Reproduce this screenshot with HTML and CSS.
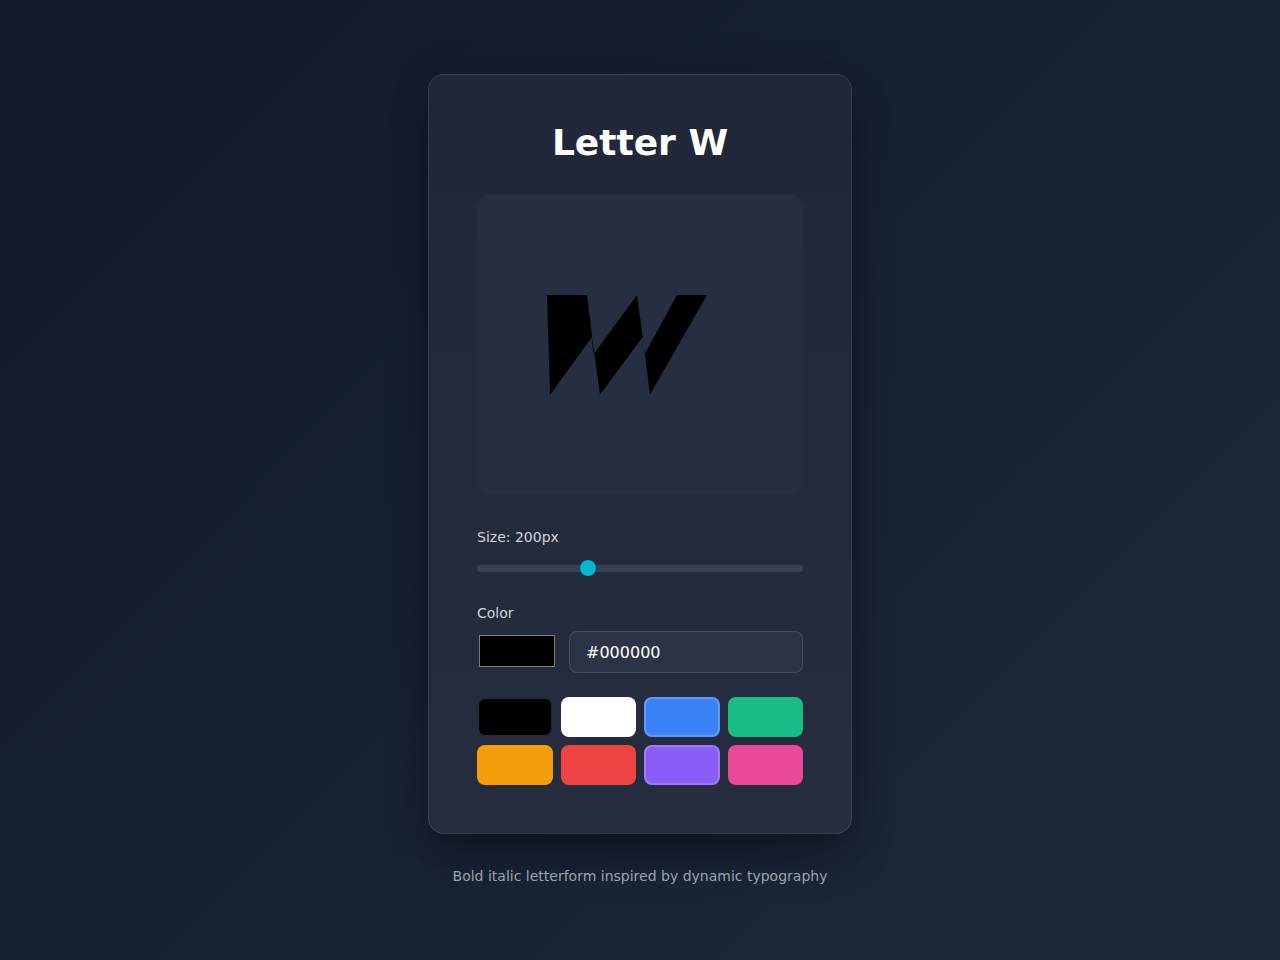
FILE: index.html
```html
<!DOCTYPE html>
<html lang="en">
<head>
<meta charset="utf-8">
<title>Letter W</title>
<link rel="stylesheet" href="styles.css">
</head>
<body>
<main class="page">
  <section class="card">
    <h1 class="title">Letter W</h1>
    <div class="preview">
      <svg class="glyph" width="326" height="300" viewBox="477 195 326 300" aria-label="W">
        <path fill="#000000" d="M547 295 L587 295 L592 337 L550 395 Z"/>
        <path fill="#000000" d="M587 295 L593.5 354.5 L637 295 L642.7 337 L600 394.5 L592 337 Z"/>
        <path fill="#000000" d="M637 295 L645 353.5 L677 295 L707 295 L650 394.5 L642.7 337 Z"/>
      </svg>
    </div>
    <div class="field">
      <label class="label" for="size">Size: 200px</label>
      <input id="size" class="slider" type="range" min="50" max="500" value="200">
    </div>
    <div class="field field-color">
      <span class="label">Color</span>
      <div class="color-row">
        <div class="picker"><span class="picker-swatch"></span></div>
        <input class="hex" type="text" value="#000000">
      </div>
    </div>
    <div class="swatches">
      <button class="swatch sw-black selected"></button>
      <button class="swatch sw-white"></button>
      <button class="swatch sw-blue ringed"></button>
      <button class="swatch sw-green"></button>
      <button class="swatch sw-amber"></button>
      <button class="swatch sw-red"></button>
      <button class="swatch sw-purple ringed"></button>
      <button class="swatch sw-pink"></button>
    </div>
  </section>
  <p class="caption">Bold italic letterform inspired by dynamic typography</p>
</main>
</body>
</html>
```
FILE: styles.css
```css
* { box-sizing: border-box; }
html, body { margin: 0; padding: 0; }
body {
  min-height: 100vh;
  background: linear-gradient(135deg, #111a2d 0%, #1e293b 100%);
  font-family: "DejaVu Sans", "Liberation Sans", sans-serif;
  color: #fff;
}
.page {
  min-height: 100vh;
  display: flex;
  flex-direction: column;
  align-items: center;
  justify-content: center;
}
.card {
  width: 424px;
  padding: 48px;
  border: 1px solid rgba(255, 255, 255, 0.1);
  border-radius: 16px;
  background: linear-gradient(180deg, #1f2738 0%, #252d3f 100%);
  box-shadow: 0 25px 50px -12px rgba(0, 0, 0, 0.45), 0 0 40px rgba(0, 0, 0, 0.14);
}
.title {
  margin: 0 0 32px;
  font-size: 36px;
  line-height: 40px;
  font-weight: 700;
  text-align: center;
  color: #ffffff;
}
.preview {
  height: 300px;
  border-radius: 12px;
  background: #262f42;
  overflow: hidden;
  display: flex;
}
.glyph { display: block; }
.field { margin-top: 32px; }
.label {
  display: block;
  font-size: 14px;
  line-height: 20px;
  color: #d1d5db;
  margin-bottom: 13px;
}
.slider {
  -webkit-appearance: none;
  appearance: none;
  display: block;
  width: 100%;
  height: 16px;
  margin: 0;
  background: transparent;
}
.slider::-webkit-slider-runnable-track {
  height: 7px;
  border-radius: 4px;
  background: #394253;
}
.slider::-webkit-slider-thumb {
  -webkit-appearance: none;
  appearance: none;
  width: 16px;
  height: 16px;
  margin-top: -4.5px;
  border: none;
  border-radius: 50%;
  background: #06b6d4;
}
.field-color { margin-top: 27px; }
.field-color .label { margin-bottom: 8px; }
.color-row {
  display: flex;
  gap: 12px;
  align-items: stretch;
}
.picker {
  width: 80px;
  height: 42px;
  padding-top: 4px;
  display: flex;
  justify-content: center;
  align-items: flex-start;
}
.picker-swatch {
  width: 76px;
  height: 32px;
  background: #000;
  border: 1px solid #777b82;
}
.hex {
  flex: 1;
  height: 42px;
  padding: 0 16px;
  border: 1px solid rgba(255, 255, 255, 0.12);
  border-radius: 8px;
  background: #2b3446;
  color: #ffffff;
  font-family: "DejaVu Sans", "Liberation Sans", sans-serif;
  font-size: 16px;
  outline: none;
}
.swatches {
  margin-top: 24px;
  display: grid;
  grid-template-columns: repeat(4, 1fr);
  gap: 8px;
}
.swatch {
  height: 40px;
  padding: 0;
  border: 2px solid transparent;
  border-radius: 8px;
  cursor: pointer;
}
.swatch.selected { border-color: #232b3d; }
.swatch.ringed { border-color: rgba(255, 255, 255, 0.2); }
.sw-black { background: #000000; }
.sw-white { background: #ffffff; }
.sw-blue { background: #3b82f6; }
.sw-green { background: #17bc87; }
.sw-amber { background: #f59e0b; }
.sw-red { background: #ef4444; }
.sw-purple { background: #8b5cf6; }
.sw-pink { background: #ec4899; }
.caption {
  margin: 32px 0 0;
  font-size: 14px;
  line-height: 20px;
  color: #9ca3af;
  text-align: center;
}
```
